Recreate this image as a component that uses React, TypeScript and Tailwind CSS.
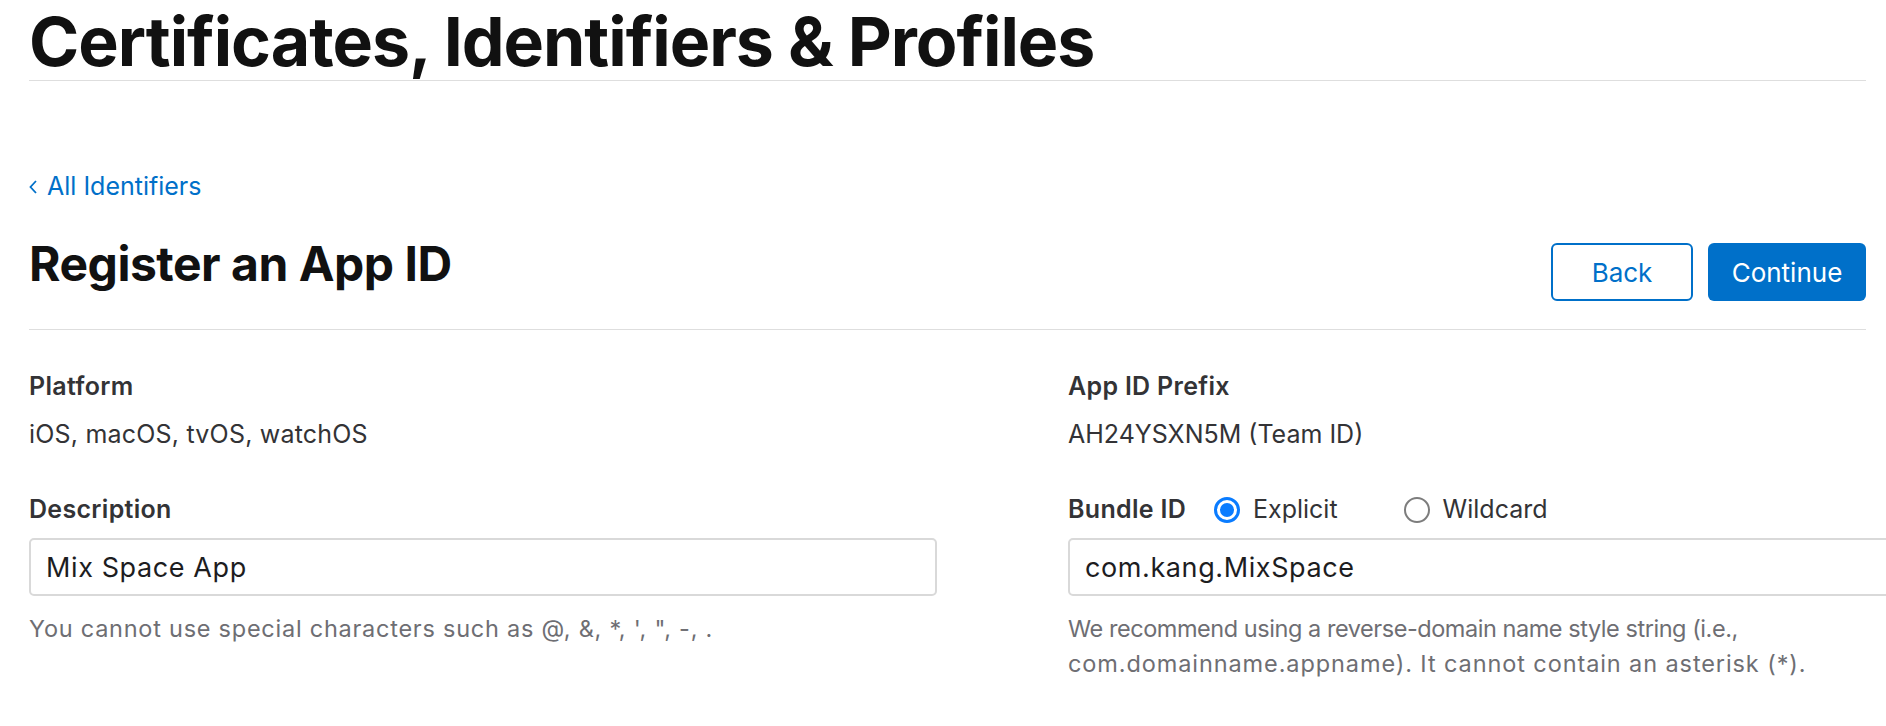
import React from 'react';

// Register an App ID form, developer portal style.

const font = { fontFamily: 'Inter, "Noto Sans", sans-serif' };

function Radio({ checked, label }: { checked?: boolean; label: string }) {
  return (
    <label className="flex items-center gap-[13px] text-[25px] leading-[35px] font-normal text-[#333336]">
      {checked ? (
        <span className="flex h-[26px] w-[26px] items-center justify-center rounded-full border-[3px] border-[#0a7cff] bg-white">
          <span className="h-[14px] w-[14px] rounded-full bg-[#0a7cff]" />
        </span>
      ) : (
        <span className="h-[26px] w-[26px] rounded-full border-2 border-[#7d7d7d] bg-white" />
      )}
      {label}
    </label>
  );
}

function TextBox({ value }: { value: string }) {
  return (
    <div className="flex h-[58px] w-[908px] items-center rounded-[5px] border-2 border-[#d9d9d9] bg-white pl-[15px] text-[27px] tracking-[0.6px] text-[#1d1d1f]">
      {value}
    </div>
  );
}

export default function App() {
  return (
    <div className="h-[726px] w-[1886px] overflow-hidden bg-white" style={font}>
      <div className="w-[1866px] pl-[29px] pt-[3px]">
        <h1 className="border-b border-[#dedede] text-[68px] leading-[77px] font-bold tracking-[-0.015em] text-[#111111]">
          Certificates, Identifiers &amp; Profiles
        </h1>

        <a className="mt-[88px] flex items-center gap-[10px] text-[25px] leading-[35px] text-[#0070c9]">
          <svg width="8" height="14" viewBox="0 0 8 14" fill="none" aria-hidden>
            <path d="M7 1L1.5 7L7 13" stroke="#0070c9" strokeWidth="1.8" />
          </svg>
          All Identifiers
        </a>

        <div className="flex items-start justify-between border-b border-[#dedede] pb-[28px]">
          <h2 className="mt-[31px] text-[48px] leading-[58px] font-bold tracking-[-0.01em] text-[#111111]">
            Register an App ID
          </h2>
          <div className="mt-[39px] flex gap-[15px]">
            <button className="h-[58px] w-[142px] rounded-[6px] border-2 border-[#0070c9] bg-white text-[26px] text-[#0070c9]">
              Back
            </button>
            <button className="h-[58px] w-[158px] rounded-[6px] bg-[#0070c9] text-[26px] text-white">
              Continue
            </button>
          </div>
        </div>

        <div className="flex gap-[131px] text-[25px] leading-[35px]">
          <div className="w-[908px] shrink-0">
            <div className="mt-[39px] font-semibold tracking-[0.3px] text-[#333336]">Platform</div>
            <div className="mt-[13px] tracking-[0.2px] text-[#333336]">iOS, macOS, tvOS, watchOS</div>
            <div className="mt-[40px] font-semibold tracking-[0.3px] text-[#333336]">Description</div>
            <div className="mt-[11px]">
              <TextBox value="Mix Space App" />
            </div>
            <p className="mt-[15px] text-[23.5px] tracking-[0.75px] text-[#6e6e73]">
              You cannot use special characters such as @, &amp;, *, ', ", -, .
            </p>
          </div>

          <div className="w-[908px] shrink-0">
            <div className="mt-[39px] font-semibold tracking-[0.3px] text-[#333336]">App ID Prefix</div>
            <div className="mt-[13px] text-[#333336]">AH24YSXN5M (Team ID)</div>
            <div className="mt-[40px] flex items-center">
              <span className="mr-[28px] font-semibold tracking-[0.3px] text-[#333336]">Bundle ID</span>
              <div className="flex gap-[66px]">
                <Radio checked label="Explicit" />
                <Radio label="Wildcard" />
              </div>
            </div>
            <div className="mt-[11px]">
              <TextBox value="com.kang.MixSpace" />
            </div>
            <p className="mt-[15px] text-[23.5px] text-[#6e6e73]">
              <span className="tracking-[-0.45px]">We recommend using a reverse-domain name style string (i.e.,</span>
              <br />
              <span className="tracking-[0.9px]">com.domainname.appname). It cannot contain an asterisk (*).</span>
            </p>
          </div>
        </div>
      </div>
    </div>
  );
}
